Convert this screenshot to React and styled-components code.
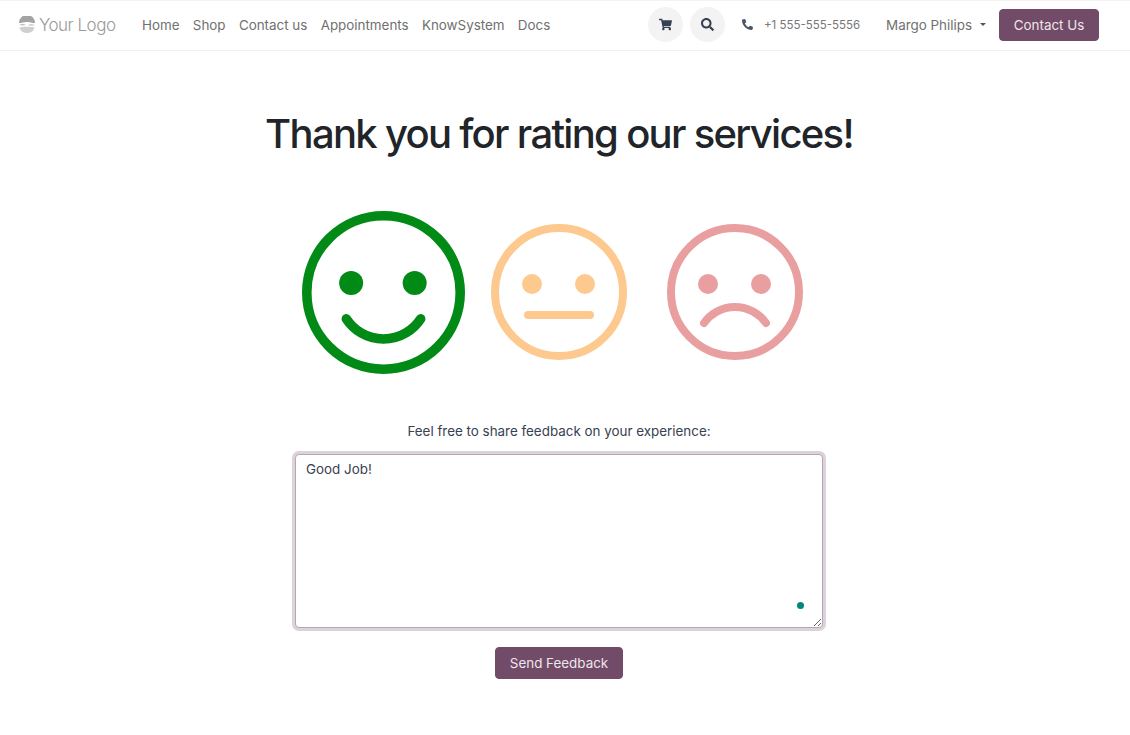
import React from "react";
import styled, { createGlobalStyle } from "styled-components";
import { FaShoppingCart, FaSearch, FaPhoneAlt } from "react-icons/fa";

const Global = createGlobalStyle`
  html, body { margin: 0; padding: 0; background: #fff; }
  body { font-family: Inter, "Liberation Sans", sans-serif; color: #374151; }
  * { box-sizing: border-box; }
`;

const Page = styled.div`
  width: 1130px;
  height: 735px;
  overflow: hidden;
  display: flex;
  flex-direction: column;
`;

const Header = styled.header`
  height: 51px;
  flex: none;
  display: flex;
  align-items: center;
  padding: 0 31px 2px 18px;
  border-top: 1px solid #f3f3f3;
  border-bottom: 1px solid #f0f0f0;
`;

const Logo = styled.div`
  display: flex;
  align-items: center;
  gap: 3px;
  width: 124px;
  flex: none;
  color: #9a9a9a;
  font-size: 17px;
  font-weight: 300;
  letter-spacing: -0.5px;
`;

const Nav = styled.nav`
  display: flex;
  gap: 13.3px;
`;

const NavLink = styled.a`
  font-size: 13.4px;
  color: #707070;
  white-space: nowrap;
`;

const Spacer = styled.div`
  flex: 1;
`;

const RoundButton = styled.div`
  width: 35px;
  height: 35px;
  border-radius: 50%;
  background: #f3f3f3;
  color: #374151;
  display: flex;
  align-items: center;
  justify-content: center;
  margin-left: ${(p) => p.$ml || 0}px;
  font-size: 13px;
`;

const Phone = styled.div`
  display: flex;
  align-items: center;
  gap: 11px;
  margin-left: 17px;
  font-size: 11.5px;
  color: #777;
  svg { color: #4b5563; font-size: 11px; }
`;

const User = styled.div`
  display: flex;
  align-items: center;
  gap: 8px;
  margin-left: 26px;
  font-size: 13.4px;
  color: #707070;
`;

const Caret = styled.span`
  width: 0;
  height: 0;
  border-left: 3px solid transparent;
  border-right: 3px solid transparent;
  border-top: 3px solid #555;
`;

const PrimaryButton = styled.button`
  background: #714b67;
  color: #efe6ec;
  border: 1px solid #714b67;
  border-radius: 4px;
  font-family: inherit;
  font-size: 13.4px;
  height: 32px;
  padding: 0;
  width: ${(p) => p.$w}px;
  margin-left: ${(p) => p.$ml || 0}px;
`;

const Main = styled.main`
  width: 1118px;
  display: flex;
  flex-direction: column;
  align-items: center;
`;

const Title = styled.h1`
  margin: 58px 0 0;
  font-size: 40px;
  line-height: 50px;
  font-weight: 500;
  letter-spacing: -1.7px;
  color: #212529;
`;

const Faces = styled.div`
  display: grid;
  grid-template-columns: repeat(3, 176px);
  justify-items: center;
  align-items: center;
  height: 164px;
  margin-top: 51px;
`;

const Label = styled.div`
  margin-top: 47px;
  font-size: 13.4px;
  line-height: 20px;
  color: #374151;
`;

const Field = styled.div`
  position: relative;
  margin-top: 13px;
  width: 528px;
  height: 174px;
`;

const TextArea = styled.textarea`
  display: block;
  width: 100%;
  height: 100%;
  padding: 5px 10px;
  font-family: inherit;
  font-size: 13.4px;
  line-height: 18px;
  color: #374151;
  background: #fff;
  border: 1px solid #b8a5b3;
  border-radius: 4px;
  outline: none;
  box-shadow: 0 0 0 3px #dcd2da;
`;

const StatusDot = styled.span`
  position: absolute;
  left: 502px;
  top: 148px;
  width: 7px;
  height: 7px;
  border-radius: 50%;
  background: #00897b;
`;

const SendButton = styled(PrimaryButton)`
  margin-top: 19px;
`;

const Face = ({ size, color, mood }) => {
  const mouth = {
    happy: "M37 90 A37 37 0 0 0 99 90",
    neutral: "M37 91 H99",
    sad: "M37 99 A38 38 0 0 1 99 99",
  }[mood];
  return (
    <svg width={size} height={size} viewBox="0 0 136 136" aria-hidden="true">
      <circle cx="68" cy="68" r="64" fill="none" stroke={color} strokeWidth="8" />
      <circle cx="41" cy="60" r="10" fill={color} />
      <circle cx="94" cy="60" r="10" fill={color} />
      <path d={mouth} fill="none" stroke={color} strokeWidth="8" strokeLinecap="round" />
    </svg>
  );
};

const LogoMark = () => (
  <svg width="18" height="18" viewBox="0 0 18 18" aria-hidden="true">
    <path d="M1 7A8 8 0 0 1 17 7C15 7.5 13 6 9 6C5 6 3 7.5 1 7Z" fill="#a3a3a3" />
    <path d="M1 9C4 7.6 6 8 8 9C6 9.6 3 9.6 1 9Z" fill="#bdbdbd" />
    <path d="M10 9C12 8 14 7.8 17 9C15 9.8 12 9.8 10 9Z" fill="#bdbdbd" />
    <path d="M1.4 11.5C4 10.6 14 10.6 16.6 11.5A8 8 0 0 1 1.4 11.5Z" fill="#cfcfcf" />
  </svg>
);

const links = ["Home", "Shop", "Contact us", "Appointments", "KnowSystem", "Docs"];

export default function App() {
  return (
    <Page>
      <Global />
      <Header>
        <Logo>
          <LogoMark />
          <span>Your Logo</span>
        </Logo>
        <Nav>
          {links.map((l) => (
            <NavLink key={l}>{l}</NavLink>
          ))}
        </Nav>
        <Spacer />
        <RoundButton><FaShoppingCart /></RoundButton>
        <RoundButton $ml={7}><FaSearch /></RoundButton>
        <Phone>
          <FaPhoneAlt />
          <span>+1 555-555-5556</span>
        </Phone>
        <User>
          <span>Margo Philips</span>
          <Caret />
        </User>
        <PrimaryButton $w={100} $ml={13}>Contact Us</PrimaryButton>
      </Header>
      <Main>
        <Title>Thank you for rating our services!</Title>
        <Faces>
          <Face size={163} color="#028a16" mood="happy" />
          <Face size={136} color="#fdc98e" mood="neutral" />
          <Face size={136} color="#e99f9f" mood="sad" />
        </Faces>
        <Label>Feel free to share feedback on your experience:</Label>
        <Field>
          <TextArea defaultValue="Good Job!" />
          <StatusDot />
        </Field>
        <SendButton $w={128}>Send Feedback</SendButton>
      </Main>
    </Page>
  );
}
